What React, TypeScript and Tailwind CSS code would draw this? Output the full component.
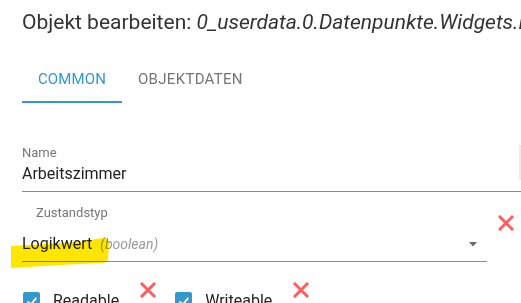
import type { ReactNode } from 'react';

function RedX({ className = '' }: { className?: string }) {
  return (
    <svg viewBox="0 0 16 16" className={`h-4 w-4 shrink-0 ${className}`}>
      <path d="M2 2 L14 14 M14 2 L2 14" stroke="#ff5c5c" strokeWidth="3" strokeLinecap="square" fill="none" />
    </svg>
  );
}

function Checkbox() {
  return (
    <span className="flex h-[17px] w-[17px] shrink-0 items-center justify-center rounded-[2px] bg-[#3399cc]">
      <svg viewBox="0 0 16 16" className="h-[14px] w-[14px]">
        <path d="M3 8.5 L6.5 12 L13 4.5" stroke="#fff" strokeWidth="2" fill="none" />
      </svg>
    </span>
  );
}

function CheckItem({ children }: { children: ReactNode }) {
  return (
    <div className="flex items-start">
      <div className="mt-[3px]">
        <Checkbox />
      </div>
      <span className="ml-[13px] text-[16px] leading-[24px] text-[#222]">{children}</span>
      <RedX className="ml-[21px] -mt-[7px]" />
    </div>
  );
}

export default function App() {
  return (
    <div
      className="relative h-[303px] w-[521px] overflow-hidden bg-white"
      style={{ fontFamily: 'Roboto, "Liberation Sans", sans-serif' }}
    >
      <h2 className="whitespace-nowrap pl-[22px] pt-[10px] text-[21px] font-normal leading-[24px] text-[#333]">
        Objekt bearbeiten: <i>0_userdata.0.Datenpunkte.Widgets.Licht</i>
      </h2>

      <div className="mt-[21px] flex h-[48px] pl-[22px]">
        <button className="relative flex h-[48px] w-[100px] items-center justify-center text-[15px] uppercase tracking-[0.01em] text-[#3399cc]">
          Common
          <span className="absolute bottom-0 left-0 h-[2px] w-full bg-[#3399cc]" />
        </button>
        <button className="flex h-[48px] items-center px-[16px] text-[15px] uppercase tracking-[0.02em] text-[#757575]">
          Objektdaten
        </button>
      </div>

      <div className="mt-[42px] pl-[22px]">
        <div className="text-[13px] leading-[16px] text-[#777]">Name</div>
        <div className="border-b border-[#8c8c8c] pb-[5px] pt-[1px] text-[16px] leading-[24px] text-[#222]">Arbeitszimmer</div>
      </div>

      <div className="mt-[13px] flex items-start pl-[22px]">
        <div className="w-[465px]">
          <div className="pl-[14px] text-[13px] leading-[16px] text-[#777]">Zustandstyp</div>
          <div className="mt-[11px] flex items-center border-b border-[#8c8c8c] pb-[5px]">
            <span className="text-[16px] leading-[24px] text-[#222]">Logikwert</span>
            <span className="ml-[8px] text-[14px] italic leading-[24px] text-[#9a9a9a]">(boolean)</span>
            <svg viewBox="0 0 8 5" className="ml-auto mr-[10px] h-[5px] w-[8px]">
              <path d="M0 0 L8 0 L4 4.5 Z" fill="#6b6b6b" />
            </svg>
          </div>
        </div>
        <RedX className="ml-[11px] mt-[10px]" />
      </div>

      <div className="mt-[27px] flex items-start gap-[19px] pl-[23px]">
        <CheckItem>Readable</CheckItem>
        <CheckItem>Writeable</CheckItem>
      </div>

      <span className="absolute right-0 top-[145px] h-[35px] w-[2px] bg-[#ececec]" />

      <svg className="pointer-events-none absolute left-[10px] top-[236px] h-[32px] w-[100px] mix-blend-multiply" viewBox="0 0 100 32">
        <path d="M1 10 L70 6 L92 2 Q99 1 99 8 L98 24 Q97 27 90 27 L50 29 L1 32 Z" fill="#ffe600" />
      </svg>
    </div>
  );
}
